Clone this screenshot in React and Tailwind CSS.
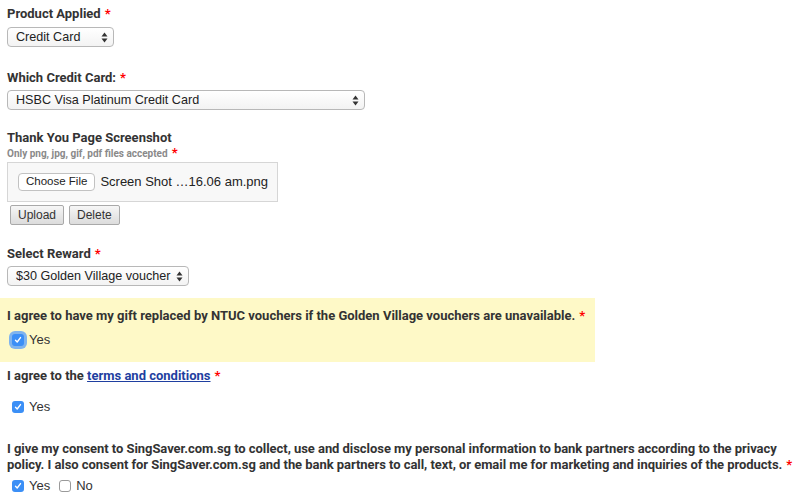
import React from 'react';

const Star = () => <span className="text-[#ff0000] ml-1">*</span>;

const Arrows = () => (
  <svg width="7" height="11" viewBox="0 0 7 11" className="shrink-0">
    <path d="M3.5 0.5L6.5 4.5H0.5Z" fill="#333" />
    <path d="M3.5 10.5L6.5 6.5H0.5Z" fill="#333" />
  </svg>
);

const FakeSelect = ({ value, width }) => (
  <div
    className={`flex items-center justify-between h-[20px] pl-[8px] pr-[5px] border border-[#b8b8b8] rounded-[4px] bg-gradient-to-b from-[#ffffff] to-[#f3f3f3] text-[12.6px] text-[#222] font-['Liberation_Sans',Arial,sans-serif] ${width}`}
  >
    <span className="leading-none whitespace-nowrap">{value}</span>
    <Arrows />
  </div>
);

const Check = ({ checked, focus }) => (
  <span
    className={`inline-flex items-center justify-center w-[12px] h-[12px] rounded-[3px] shrink-0 ${
      checked ? 'bg-[#3b8ff6]' : 'bg-white border border-[#9a9a9a]'
    } ${focus ? 'ring-[3px] ring-[#7fb4ee]' : ''}`}
  >
    {checked && (
      <svg width="8" height="8" viewBox="0 0 8 8">
        <path d="M1.5 4.3L3.2 6L6.5 1.6" fill="none" stroke="#fff" strokeWidth="1.4" strokeLinecap="round" strokeLinejoin="round" />
      </svg>
    )}
  </span>
);

const Label = ({ children, className = '' }) => (
  <div className={`font-['Roboto',sans-serif] font-bold text-[13px] text-[#333] leading-[16px] ${className}`}>{children}</div>
);

const Option = ({ label, checked, focus }) => (
  <label className="inline-flex items-center gap-[5px] font-['Liberation_Sans',Arial,sans-serif] text-[13px] text-[#333]">
    <Check checked={checked} focus={focus} />
    <span>{label}</span>
  </label>
);

const Btn = ({ children }) => (
  <button className="h-[20px] px-[7px] border border-[#a9a9a9] rounded-[2px] bg-gradient-to-b from-[#f6f6f6] to-[#dcdcdc] text-[12px] text-[#333] font-['Liberation_Sans',Arial,sans-serif] leading-none">
    {children}
  </button>
);

export default function App() {
  return (
    <div className="w-[809px] h-[503px] bg-white overflow-hidden">
      <div className="px-[7px] pt-[6px]">
        <Label>Product Applied<Star /></Label>
        <div className="mt-[5px]"><FakeSelect value="Credit Card" width="w-[107px]" /></div>

        <Label className="mt-[23px]">Which Credit Card:<Star /></Label>
        <div className="mt-[4px]"><FakeSelect value="HSBC Visa Platinum Credit Card" width="w-[358px]" /></div>

        <Label className="mt-[20px]">Thank You Page Screenshot</Label>
        <div className="font-['Roboto',sans-serif] font-bold text-[10px] text-[#8a8a8a] leading-[12px] mt-[1px]">
          Only png, jpg, gif, pdf files accepted<span className="text-[#ff0000] text-[13px] ml-1">*</span>
        </div>
        <div className="mt-[2px] w-[271px] h-[40px] border border-[#d6d6d6] bg-[#f8f8f8] flex items-center pl-[10px] gap-[5px]">
          <span className="h-[18px] px-[7px] border border-[#c2c2c2] rounded-[4px] bg-white flex items-center text-[11.5px] text-[#222] font-['Liberation_Sans',Arial,sans-serif]">Choose File</span>
          <span className="text-[13px] text-[#222] font-['Liberation_Sans',Arial,sans-serif]">Screen Shot …16.06 am.png</span>
        </div>
        <div className="flex gap-[5px] ml-[3px] mt-[3px]">
          <Btn>Upload</Btn>
          <Btn>Delete</Btn>
        </div>

        <Label className="mt-[21px]">Select Reward<Star /></Label>
        <div className="mt-[4px]"><FakeSelect value="$30 Golden Village voucher" width="w-[182px]" /></div>
      </div>

      <div className="mt-[12px] w-[595px] h-[64px] bg-[#fef9c7] px-[7px] pt-[10px]">
        <Label>I agree to have my gift replaced by NTUC vouchers if the Golden Village vouchers are unavailable.<Star /></Label>
        <div className="mt-[2px] ml-[5px]"><Option label="Yes" checked focus /></div>
      </div>

      <div className="px-[7px] pt-[6px]">
        <Label>
          I agree to the <span className="text-[#1f3fa0] underline">terms and conditions</span><Star />
        </Label>
        <div className="mt-[9px] ml-[5px]"><Option label="Yes" checked /></div>

        <Label className="mt-[24px] leading-[15px] tracking-[-0.05px]">
          I give my consent to SingSaver.com.sg to collect, use and disclose my personal information to bank partners according to the privacy policy. I also consent for SingSaver.com.sg and the bank partners to call, text, or email me for marketing and inquiries of the products.<Star />
        </Label>
        <div className="mt-[3px] ml-[5px] flex gap-[9px]">
          <Option label="Yes" checked />
          <Option label="No" />
        </div>
      </div>
    </div>
  );
}
